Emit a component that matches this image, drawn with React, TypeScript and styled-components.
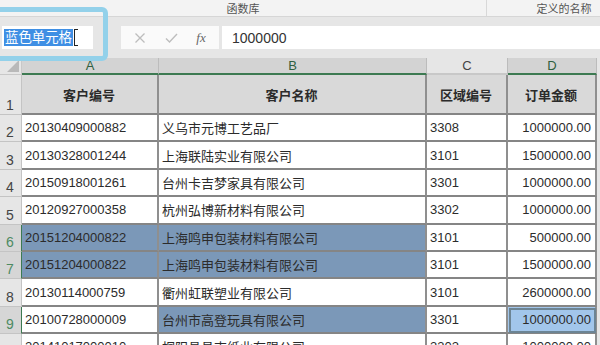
import { Fragment } from "react";
import styled, { createGlobalStyle } from "styled-components";

const GlobalStyle = createGlobalStyle`
    html, body {
        margin: 0;
        padding: 0;
        overflow: hidden;
    }
    body {
        font-family: "Liberation Sans", "Noto Sans CJK SC", sans-serif;
        color: #333;
    }
`;

const CJK = `"Liberation Sans", "Noto Sans CJK SC", sans-serif`;

const Page = styled.div`
    position: relative;
    width: 600px;
    height: 345px;
    overflow: hidden;
    background-color: #e6e6e6;
`;

const Ribbon = styled.div`
    display: flex;
    height: 16px;
    background-color: #f3f3f3;
    border-bottom: 1px solid #d6d6d6;
`;

const RibbonGroup = styled.div<{ $width: number; $sep?: boolean }>`
    flex: 0 0 ${({ $width }) => $width}px;
    display: flex;
    align-items: center;
    justify-content: center;
    font-family: ${CJK};
    font-size: 11px;
    color: #555;
    border-left: ${({ $sep }) => ($sep ? "1px solid #d8d8d8" : "none")};
`;

const FormulaBar = styled.div`
    display: flex;
    align-items: center;
    height: 41px;
    padding: 0 0 0 2px;
`;

const NameBox = styled.div`
    display: flex;
    align-items: center;
    width: 91px;
    height: 23px;
    background-color: #fff;
    padding-left: 2px;
    box-sizing: border-box;
`;

const Selected = styled.span`
    background-color: #3f8fe4;
    color: #fff;
    font-family: ${CJK};
    font-size: 13.4px;
    line-height: 17px;
    padding: 0 1px;
`;

const Caret = styled.span`
    width: 3px;
    height: 15px;
    border: 1.5px solid #222;
    border-right: none;
    margin-left: 1px;
`;

const FxButtons = styled.div`
    display: flex;
    align-items: center;
    justify-content: space-around;
    width: 98px;
    height: 23px;
    margin-left: 28px;
    background-color: #fafafa;
    padding: 0 4px;
    box-sizing: border-box;
`;

const FxIcon = styled.span`
    font-family: "Liberation Serif", serif;
    font-style: italic;
    font-size: 13px;
    color: #666;
`;

const FormulaInput = styled.div`
    flex: 1;
    height: 23px;
    margin-left: 3px;
    background-color: #fff;
    display: flex;
    align-items: center;
    padding-left: 10px;
    font-size: 14px;
    color: #333;
`;

// light-blue annotation frame drawn over the name box
const Callout = styled.div`
    position: absolute;
    left: -8px;
    top: 7px;
    width: 116px;
    height: 54px;
    box-sizing: border-box;
    border: 5px solid #93d1ea;
    border-radius: 6px;
    pointer-events: none;
`;

const Sheet = styled.div`
    display: grid;
    grid-template-columns: 22px 137px 268px 81px 89px 3px;
    grid-auto-rows: 27.4px;
    grid-template-rows: 17px 40px;
`;

const Corner = styled.div`
    position: relative;
    background-color: #e6e6e6;
    border-right: 1px solid #c8c8c8;
    border-bottom: 1px solid #c8c8c8;
`;

const Triangle = styled.div`
    position: absolute;
    right: 2px;
    bottom: 2px;
    width: 0;
    height: 0;
    border-left: 12px solid transparent;
    border-bottom: 12px solid #b9b9b9;
`;

const ColHead = styled.div<{ $active?: boolean }>`
    display: flex;
    align-items: center;
    justify-content: center;
    font-size: 13px;
    color: ${({ $active }) => ($active ? "#2f5f40" : "#444")};
    background-color: ${({ $active }) => ($active ? "#d3d3d3" : "#e6e6e6")};
    border-right: 1px solid #bcbcbc;
    border-bottom: 2px solid ${({ $active }) => ($active ? "#3d7a52" : "#c8c8c8")};
    box-sizing: border-box;
`;

const RowHead = styled.div<{ $active?: boolean }>`
    display: flex;
    align-items: flex-end;
    padding: 0 0 1px 6px;
    font-size: 14px;
    line-height: 16px;
    color: ${({ $active }) => ($active ? "#4d8a62" : "#444")};
    background-color: ${({ $active }) => ($active ? "#d6d6d6" : "#e6e6e6")};
    border-bottom: 1px solid #c4c4c4;
    border-right: 1px solid ${({ $active }) => ($active ? "#3d7a52" : "#c4c4c4")};
    box-sizing: border-box;
`;

type Tone = "plain" | "head" | "sel" | "cur";

const toneBg: Record<Tone, string> = {
    plain: "#ffffff",
    head: "#d9d9d9",
    sel: "#7b98b8",
    cur: "#a2c6eb",
};

const Cell = styled.div<{ $tone: Tone; $align: "left" | "right" | "center" }>`
    display: flex;
    align-items: center;
    justify-content: ${({ $align }) =>
        $align === "left" ? "flex-start" : $align === "right" ? "flex-end" : "center"};
    padding: 0 4px 0 3px;
    font-family: ${CJK};
    font-size: 13px;
    font-weight: ${({ $tone }) => ($tone === "head" ? 700 : 400)};
    color: #2b2b2b;
    white-space: nowrap;
    overflow: hidden;
    background-color: ${({ $tone }) => toneBg[$tone]};
    border-right: 2px solid #8f8f8f;
    border-bottom: 2px solid #858585;
    box-sizing: border-box;
    ${({ $tone }) =>
        $tone === "cur" ? "outline: 2px solid #6c8494; outline-offset: -3px;" : ""}
`;

const Gutter = styled.div`
    background-color: #e6e6e6;
`;

type Row = { n: number; a: string; b: string; c: string; d: string; sel?: boolean; selB?: boolean; cur?: boolean };

const rows: Row[] = [
    { n: 2, a: "20130409000882", b: "义乌市元博工艺品厂", c: "3308", d: "1000000.00" },
    { n: 3, a: "20130328001244", b: "上海联陆实业有限公司", c: "3101", d: "1500000.00" },
    { n: 4, a: "20150918001261", b: "台州卡吉梦家具有限公司", c: "3301", d: "1000000.00" },
    { n: 5, a: "20120927000358", b: "杭州弘博新材料有限公司", c: "3302", d: "1000000.00" },
    { n: 6, a: "20151204000822", b: "上海鸣申包装材料有限公司", c: "3101", d: "500000.00", sel: true },
    { n: 7, a: "20151204000822", b: "上海鸣申包装材料有限公司", c: "3101", d: "1500000.00", sel: true },
    { n: 8, a: "20130114000759", b: "衢州虹联塑业有限公司", c: "3101", d: "2600000.00" },
    { n: 9, a: "20100728000009", b: "台州市高登玩具有限公司", c: "3301", d: "1000000.00", selB: true, cur: true },
    { n: 10, a: "20141017000010", b: "桐阳县昌吉纸业有限公司", c: "3302", d: "1000000.00" },
];

function App() {
    return (
        <Page>
            <GlobalStyle />
            <Ribbon>
                <RibbonGroup $width={486}>函数库</RibbonGroup>
                <RibbonGroup $width={154} $sep>
                    定义的名称
                </RibbonGroup>
            </Ribbon>
            <FormulaBar>
                <NameBox>
                    <Selected>蓝色单元格</Selected>
                    <Caret />
                </NameBox>
                <FxButtons>
                    <svg width="12" height="12" viewBox="0 0 12 12">
                        <path d="M1.5 1.5 L10.5 10.5 M10.5 1.5 L1.5 10.5" stroke="#bdbdbd" strokeWidth="1.3" />
                    </svg>
                    <svg width="13" height="12" viewBox="0 0 13 12">
                        <path d="M1 6.5 L4.5 10 L12 2" stroke="#bdbdbd" strokeWidth="1.4" fill="none" />
                    </svg>
                    <FxIcon>fx</FxIcon>
                </FxButtons>
                <FormulaInput>1000000</FormulaInput>
            </FormulaBar>
            <Sheet>
                <Corner>
                    <Triangle />
                </Corner>
                <ColHead $active>A</ColHead>
                <ColHead $active>B</ColHead>
                <ColHead>C</ColHead>
                <ColHead $active>D</ColHead>
                <Gutter />

                <RowHead>1</RowHead>
                <Cell $tone="head" $align="center">客户编号</Cell>
                <Cell $tone="head" $align="center">客户名称</Cell>
                <Cell $tone="head" $align="center">区域编号</Cell>
                <Cell $tone="head" $align="center">订单金额</Cell>
                <Gutter />

                {rows.map((r) => (
                    <Fragment key={r.n}>
                        <RowHead $active={r.sel || r.selB}>{r.n}</RowHead>
                        <Cell $tone={r.sel ? "sel" : "plain"} $align="left">
                            {r.a}
                        </Cell>
                        <Cell $tone={r.sel || r.selB ? "sel" : "plain"} $align="left">
                            {r.b}
                        </Cell>
                        <Cell $tone="plain" $align="left">
                            {r.c}
                        </Cell>
                        <Cell $tone={r.cur ? "cur" : "plain"} $align="right">
                            {r.d}
                        </Cell>
                        <Gutter />
                    </Fragment>
                ))}
            </Sheet>
            <Callout />
        </Page>
    );
}

export default App;
